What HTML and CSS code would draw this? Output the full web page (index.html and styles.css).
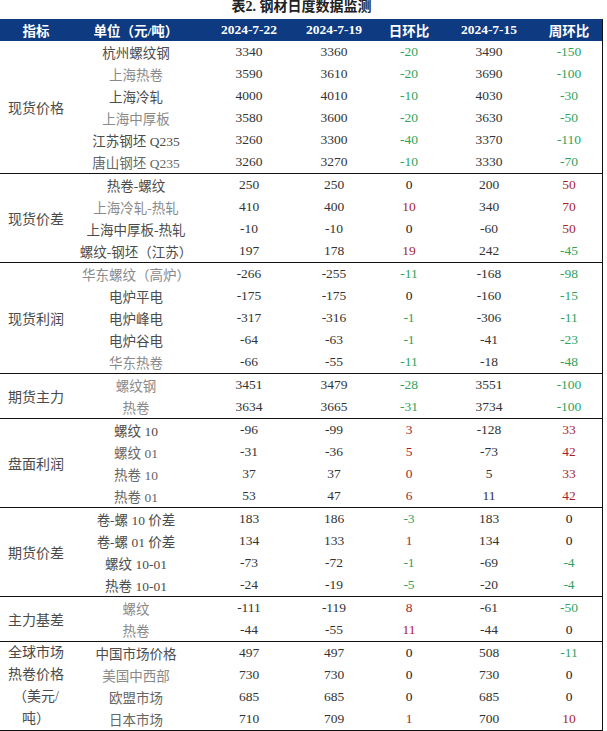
FILE: index.html
```html
<!DOCTYPE html>
<html lang="zh">
<head>
<meta charset="utf-8">
<link rel="stylesheet" href="styles.css">
</head>
<body>
<div class="sheet">
  <div class="title">表2. 钢材日度数据监测</div>
  <div class="table">
    <div class="row head">
      <div>指标</div><div>单位（元/吨）</div><div>2024-7-22</div><div>2024-7-19</div><div>日环比</div><div>2024-7-15</div><div class="c7">周环比</div>
    </div>

    <div class="group first">
      <div class="label span6">现货价格</div>
      <div class="nm">杭州螺纹钢</div><div>3340</div><div>3360</div><div class="g">-20</div><div>3490</div><div class="g c7">-150</div>
      <div class="nm lt">上海热卷</div><div>3590</div><div>3610</div><div class="g">-20</div><div>3690</div><div class="g c7">-100</div>
      <div class="nm">上海冷轧</div><div>4000</div><div>4010</div><div class="g">-10</div><div>4030</div><div class="g c7">-30</div>
      <div class="nm lt">上海中厚板</div><div>3580</div><div>3600</div><div class="g">-20</div><div>3630</div><div class="g c7">-50</div>
      <div class="nm">江苏钢坯 Q235</div><div>3260</div><div>3300</div><div class="g">-40</div><div>3370</div><div class="g c7">-110</div>
      <div class="nm md">唐山钢坯 Q235</div><div>3260</div><div>3270</div><div class="g">-10</div><div>3330</div><div class="g c7">-70</div>
    </div>

    <div class="group">
      <div class="label span4">现货价差</div>
      <div class="nm">热卷-螺纹</div><div>250</div><div>250</div><div class="z">0</div><div>200</div><div class="r c7">50</div>
      <div class="nm lt">上海冷轧-热轧</div><div>410</div><div>400</div><div class="r">10</div><div>340</div><div class="r c7">70</div>
      <div class="nm">上海中厚板-热轧</div><div>-10</div><div>-10</div><div class="z">0</div><div>-60</div><div class="r c7">50</div>
      <div class="nm">螺纹-钢坯（江苏）</div><div>197</div><div>178</div><div class="r">19</div><div>242</div><div class="g c7">-45</div>
    </div>

    <div class="group">
      <div class="label span5">现货利润</div>
      <div class="nm lt">华东螺纹（高炉）</div><div>-266</div><div>-255</div><div class="g">-11</div><div>-168</div><div class="g c7">-98</div>
      <div class="nm">电炉平电</div><div>-175</div><div>-175</div><div class="z">0</div><div>-160</div><div class="g c7">-15</div>
      <div class="nm">电炉峰电</div><div>-317</div><div>-316</div><div class="g">-1</div><div>-306</div><div class="g c7">-11</div>
      <div class="nm">电炉谷电</div><div>-64</div><div>-63</div><div class="g">-1</div><div>-41</div><div class="g c7">-23</div>
      <div class="nm lt">华东热卷</div><div>-66</div><div>-55</div><div class="g">-11</div><div>-18</div><div class="g c7">-48</div>
    </div>

    <div class="group">
      <div class="label span2">期货主力</div>
      <div class="nm lt">螺纹钢</div><div>3451</div><div>3479</div><div class="g">-28</div><div>3551</div><div class="g c7">-100</div>
      <div class="nm lt">热卷</div><div>3634</div><div>3665</div><div class="g">-31</div><div>3734</div><div class="g c7">-100</div>
    </div>

    <div class="group">
      <div class="label span4">盘面利润</div>
      <div class="nm">螺纹 10</div><div>-96</div><div>-99</div><div class="r">3</div><div>-128</div><div class="r c7">33</div>
      <div class="nm md">螺纹 01</div><div>-31</div><div>-36</div><div class="r">5</div><div>-73</div><div class="r c7">42</div>
      <div class="nm md">热卷 10</div><div>37</div><div>37</div><div class="r">0</div><div>5</div><div class="r c7">33</div>
      <div class="nm md">热卷 01</div><div>53</div><div>47</div><div class="r">6</div><div>11</div><div class="r c7">42</div>
    </div>

    <div class="group">
      <div class="label span4">期货价差</div>
      <div class="nm">卷-螺 10 价差</div><div>183</div><div>186</div><div class="g">-3</div><div>183</div><div class="z c7">0</div>
      <div class="nm">卷-螺 01 价差</div><div>134</div><div>133</div><div class="r">1</div><div>134</div><div class="z c7">0</div>
      <div class="nm">螺纹 10-01</div><div>-73</div><div>-72</div><div class="g">-1</div><div>-69</div><div class="g c7">-4</div>
      <div class="nm">热卷 10-01</div><div>-24</div><div>-19</div><div class="g">-5</div><div>-20</div><div class="g c7">-4</div>
    </div>

    <div class="group">
      <div class="label span2">主力基差</div>
      <div class="nm lt">螺纹</div><div>-111</div><div>-119</div><div class="r">8</div><div>-61</div><div class="g c7">-50</div>
      <div class="nm lt">热卷</div><div>-44</div><div>-55</div><div class="r">11</div><div>-44</div><div class="z c7">0</div>
    </div>

    <div class="group last">
      <div class="label span4 multi">全球市场<br>热卷价格<br>（美元/<br>吨）</div>
      <div class="nm">中国市场价格</div><div>497</div><div>497</div><div class="z">0</div><div>508</div><div class="g c7">-11</div>
      <div class="nm lt">美国中西部</div><div>730</div><div>730</div><div class="z">0</div><div>730</div><div class="z c7">0</div>
      <div class="nm md">欧盟市场</div><div>685</div><div>685</div><div class="z">0</div><div>685</div><div class="z c7">0</div>
      <div class="nm md">日本市场</div><div>710</div><div>709</div><div class="r">1</div><div>700</div><div class="r c7">10</div>
    </div>
  </div>
</div>
</body>
</html>
```

FILE: styles.css
```css
html, body {
  margin: 0;
  padding: 0;
  background: #ffffff;
}

.sheet {
  width: 603px;
  font-family: "Liberation Serif", "Noto Sans CJK SC", serif;
  color: #333333;
}

.title {
  height: 19px;
  line-height: 14px;
  font-size: 14px;
  font-weight: bold;
  text-align: center;
  color: #222222;
}

.table {
  border-right: 1px solid #111111;
  width: 602px;
}

.row,
.group {
  display: grid;
  grid-template-columns: 72px 128px 98px 72px 78px 82px 72px;
  grid-auto-rows: 22px;
}

.row > div,
.group > div {
  display: flex;
  align-items: center;
  justify-content: center;
  white-space: nowrap;
  font-size: 13.5px;
}

.head {
  background: #0d3a80;
  color: #ffffff;
  font-weight: bold;
  height: 22px;
}

.head > div {
  font-size: 13.5px;
}

.c7 {
  padding-left: 6px;
}

.group {
  border-top: 1px solid #111111;
}

.group.first {
  border-top: none;
}

.group.last {
  border-bottom: 1px solid #111111;
}

.label {
  grid-column: 1;
  font-size: 14px !important;
  color: #4a4a4a;
}

.span2 { grid-row: 1 / span 2; }
.span4 { grid-row: 1 / span 4; }
.span5 { grid-row: 1 / span 5; }
.span6 { grid-row: 1 / span 6; }

.label.multi {
  flex-direction: column;
  white-space: normal;
  line-height: 22px;
  text-align: center;
}

.nm {
  color: #4c4c4c;
}

.nm.lt {
  color: #8a8a8a;
}

.nm.md {
  color: #666666;
}

.g {
  color: #2fa35c;
}

.r {
  color: #a71f2c;
}

.z {
  color: #222222;
}
```
